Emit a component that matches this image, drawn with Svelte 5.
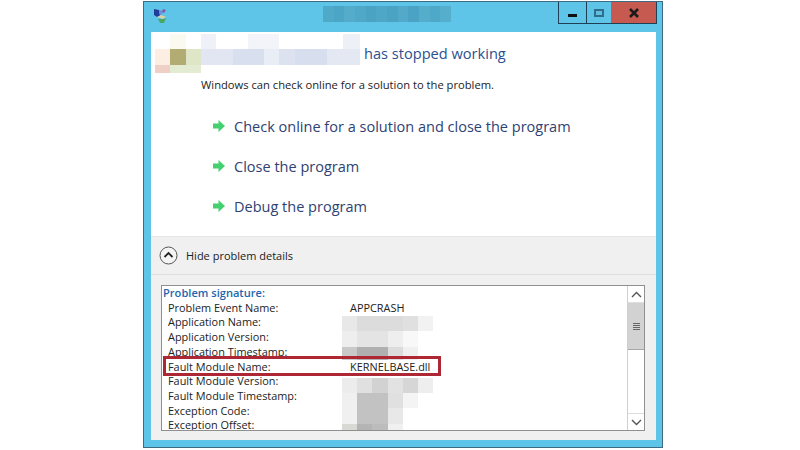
<script>
  const titleCells = ['#4fa9c8','#4ba6c6','#55acca','#4fa8c8','#4aa3c3','#4ea7c7','#4aa3c3','#52a9c9','#4aa3c4','#55adcc','#4ea8c8','#56aecd'];

  const heading = [
    { x: 15, y: 0, w: 16, h: 15, c: '#fbfaf0' },
    { x: 46, y: 0, w: 15, h: 15, c: '#f0f1f8' },
    { x: 93, y: 0, w: 31, h: 15, c: '#f3f4fa' },
    { x: 188, y: 0, w: 17, h: 15, c: '#eef0f8' },
    { x: 0, y: 15, w: 15, h: 16, c: '#fdeee3' },
    { x: 15, y: 15, w: 16, h: 16, c: '#b3ac72' },
    { x: 31, y: 15, w: 15, h: 16, c: '#dfe6c8' },
    { x: 46, y: 15, w: 32, h: 16, c: '#e1e6f2' },
    { x: 78, y: 15, w: 31, h: 16, c: '#d8dfee' },
    { x: 109, y: 15, w: 15, h: 16, c: '#e9edf6' },
    { x: 124, y: 15, w: 16, h: 16, c: '#dde2f0' },
    { x: 140, y: 15, w: 32, h: 16, c: '#d7deed' },
    { x: 172, y: 15, w: 33, h: 16, c: '#e4e8f3' },
    { x: 0, y: 31, w: 15, h: 8, c: '#efcfc6' },
    { x: 15, y: 31, w: 31, h: 8, c: '#e3ecd2' }
  ];

  const blur = [
    { x: 0, y: 0, w: 15, h: 15, c: '#e8e8e8' },
    { x: 15, y: 0, w: 46, h: 15, c: '#dcdcdc' },
    { x: 61, y: 0, w: 15, h: 15, c: '#e0e0e0' },
    { x: 76, y: 0, w: 15, h: 15, c: '#f2f2f2' },
    { x: 0, y: 15, w: 15, h: 16, c: '#eeeeee' },
    { x: 15, y: 15, w: 31, h: 16, c: '#e4e4e4' },
    { x: 46, y: 15, w: 15, h: 16, c: '#eeeeee' },
    { x: 61, y: 15, w: 15, h: 16, c: '#f8f8f8' },
    { x: 0, y: 31, w: 15, h: 15, c: '#c9c9c9' },
    { x: 15, y: 31, w: 31, h: 15, c: '#b0b0b0' },
    { x: 46, y: 31, w: 15, h: 15, c: '#dcdcdc' },
    { x: 61, y: 31, w: 15, h: 15, c: '#f0f0f0' },
    { x: 0, y: 62, w: 15, h: 15, c: '#ececec' },
    { x: 15, y: 62, w: 15, h: 15, c: '#e0e0e0' },
    { x: 30, y: 62, w: 16, h: 15, c: '#d2d2d2' },
    { x: 46, y: 62, w: 15, h: 15, c: '#e2e2e2' },
    { x: 61, y: 62, w: 15, h: 15, c: '#d6d6d6' },
    { x: 76, y: 62, w: 15, h: 15, c: '#eeeeee' },
    { x: 0, y: 77, w: 15, h: 31, c: '#f0f0f0' },
    { x: 15, y: 77, w: 31, h: 31, c: '#c2c2c2' },
    { x: 46, y: 77, w: 15, h: 15, c: '#e0e0e0' },
    { x: 46, y: 92, w: 15, h: 16, c: '#e8e8e8' },
    { x: 61, y: 77, w: 15, h: 15, c: '#f4f4f4' },
    { x: 0, y: 108, w: 15, h: 8, c: '#d8d8d4' },
    { x: 15, y: 108, w: 15, h: 8, c: '#b4b4b4' },
    { x: 30, y: 108, w: 16, h: 8, c: '#bcbcbc' },
    { x: 46, y: 108, w: 15, h: 8, c: '#f0f0f0' }
  ];

  const actions = [
    'Check online for a solution and close the program',
    'Close the program',
    'Debug the program'
  ];

  const rows = [
    ['Problem Event Name:', 'APPCRASH'],
    ['Application Name:', ''],
    ['Application Version:', ''],
    ['Application Timestamp:', ''],
    ['Fault Module Name:', 'KERNELBASE.dll'],
    ['Fault Module Version:', ''],
    ['Fault Module Timestamp:', ''],
    ['Exception Code:', ''],
    ['Exception Offset:', '']
  ];

  const tile = (t) => `left:${t.x}px;top:${t.y}px;width:${t.w}px;height:${t.h}px;background:${t.c}`;
</script>

<div class="page">
  <div class="window">
    <div class="titlebar">
      <svg class="appicon" width="15" height="16" viewBox="0 0 15 16">
        <path d="M1 1l5 1 1 6-3 1-3-2z" fill="#1f3f9a" />
        <path d="M6 2l4 1-1 3-2 2z" fill="#6f8fd8" />
        <path d="M10 1l3 1-2 3-2-1z" fill="#7d5aa8" />
        <path d="M4 9l4-2 5 2-3 2z" fill="#d8d4a8" />
        <path d="M5 11l5 0 3-1-2 5-4 0z" fill="#49a868" />
      </svg>
      <div class="title-blur">
        {#each titleCells as c}
          <span style="background:{c}"></span>
        {/each}
      </div>
      <div class="controls">
        <div class="ctl min"><span class="min-bar"></span></div>
        <div class="ctl max"><span class="max-box"></span></div>
        <div class="ctl close">
          <svg width="12" height="10" viewBox="0 0 12 10">
            <path d="M2 1l8 8M10 1l-8 8" stroke="#1d1a1a" stroke-width="2.6" fill="none" />
          </svg>
        </div>
      </div>
    </div>

    <div class="content">
      <div class="top">
        <div class="heading">
          <div class="heading-blur">
            {#each heading as t}
              <span style={tile(t)}></span>
            {/each}
          </div>
          <span class="heading-text">has stopped working</span>
        </div>
        <p class="sub">Windows can check online for a solution to the problem.</p>
        <ul class="actions">
          {#each actions as a}
            <li>
              <svg width="14" height="14" viewBox="0 0 14 14">
                <path d="M1 4.500h5.500V1L13 7l-6.500 6V9.500H1z" fill="#46cf6e" />
              </svg>
              <span>{a}</span>
            </li>
          {/each}
        </ul>
      </div>

      <div class="details">
        <div class="toggle">
          <span class="chevron">
            <svg width="19" height="19" viewBox="0 0 19 19">
              <circle cx="9.500" cy="9.500" r="8.500" fill="#f4f4f4" stroke="#555" stroke-width="1" />
              <path d="M5.500 11l4-4 4 4" stroke="#222" stroke-width="1.800" fill="none" />
            </svg>
          </span>
          <span>Hide problem details</span>
        </div>
        <div class="panel">
          <div class="listbox">
            <div class="list">
              <div class="blur">
                {#each blur as t}
                  <span style={tile(t)}></span>
                {/each}
              </div>
              <div class="sig">Problem signature:</div>
              {#each rows as r, i}
                <div class="row" class:hl={i === 4}>
                  <span class="k">{r[0]}</span>
                  <span class="v">{r[1]}</span>
                </div>
              {/each}
              <div class="redbox"></div>
            </div>
            <div class="scrollbar">
              <div class="sb-btn">
                <svg width="11" height="7" viewBox="0 0 11 7"><path d="M1 6l4.500-4.500L10 6" stroke="#555" stroke-width="1.400" fill="none" /></svg>
              </div>
              <div class="thumb">
                <span></span><span></span><span></span><span></span>
              </div>
              <div class="track"></div>
              <div class="sb-btn down">
                <svg width="11" height="7" viewBox="0 0 11 7"><path d="M1 1l4.500 4.500L10 1" stroke="#555" stroke-width="1.400" fill="none" /></svg>
              </div>
            </div>
          </div>
        </div>
      </div>
    </div>
  </div>
</div>

<style>
  :global(body) {
    margin: 0;
    background: #fff;
  }

  .page {
    width: 800px;
    height: 450px;
    padding: 1px 0 0 143px;
    box-sizing: border-box;
    font-family: "Open Sans", "Noto Sans", sans-serif;
    overflow: hidden;
  }

  .window {
    width: 520px;
    height: 447px;
    box-sizing: border-box;
    background: #5ec5e9;
    border: 1px solid #3d6b82;
    padding: 0 6px 7px 7px;
    display: flex;
    flex-direction: column;
  }

  .titlebar {
    height: 30px;
    flex: none;
    position: relative;
    display: flex;
    justify-content: center;
  }

  .appicon {
    position: absolute;
    left: 2px;
    top: 6px;
  }

  .title-blur {
    display: flex;
    height: 16px;
    margin: 4px 33px 0 0;
  }

  .title-blur span {
    width: 10.700px;
  }

  .controls {
    position: absolute;
    right: -1px;
    top: 0;
    height: 22px;
    display: flex;
    border: 1px solid #1f3f55;
    border-top: none;
    box-sizing: border-box;
  }

  .ctl {
    display: flex;
    align-items: center;
    justify-content: center;
    height: 21px;
  }

  .min {
    width: 27px;
    border-right: 1px solid #1f3f55;
  }

  .min-bar {
    width: 9px;
    height: 3px;
    background: #111;
    margin-top: 6px;
  }

  .max {
    width: 24px;
  }

  .max-box {
    width: 6px;
    height: 4px;
    border: 2px solid #2c6e8c;
    background: #62bedd;
  }

  .close {
    width: 45px;
    background: #c65a50;
  }

  .content {
    flex: 1;
    display: flex;
    flex-direction: column;
    background: #fff;
    min-height: 0;
  }

  .top {
    height: 204px;
    flex: none;
  }

  .heading {
    position: relative;
    height: 39px;
    padding: 3px 0 0 213px;
    box-sizing: border-box;
  }

  .heading-blur {
    position: absolute;
    left: 4px;
    top: 2px;
  }

  .heading-blur span {
    position: absolute;
    display: block;
  }

  .heading-text {
    font-size: 14.600px;
    line-height: 36px;
    color: #2b4f8f;
  }

  .sub {
    margin: 6px 0 0 50px;
    font-size: 11.200px;
    line-height: 16px;
    color: #222;
  }

  .actions {
    list-style: none;
    margin: 13px 0 0 61px;
    padding: 0;
  }

  .actions li {
    height: 40px;
    display: flex;
    align-items: center;
    gap: 8px;
    font-size: 14.530px;
    color: #2e4272;
  }

  .details {
    flex: 1;
    min-height: 0;
    display: flex;
    flex-direction: column;
    background: #f0f0f0;
    border-top: 1px solid #e6e6e6;
  }

  .toggle {
    height: 38px;
    flex: none;
    box-sizing: border-box;
    display: flex;
    align-items: center;
    gap: 8px;
    padding: 0 0 1px 8px;
    font-size: 11px;
    color: #222;
    border-bottom: 1px solid #dedede;
  }

  .chevron {
    display: flex;
  }

  .panel {
    flex: 1;
    min-height: 0;
    padding: 10px 11px 9px 10px;
  }

  .listbox {
    height: 100%;
    box-sizing: border-box;
    display: flex;
    background: #fff;
    border: 1px solid #8f8f8f;
    overflow: hidden;
  }

  .list {
    flex: 1;
    position: relative;
    padding: 0 0 0 1px;
    overflow: hidden;
    font-size: 10.900px;
    line-height: 14.700px;
    color: #222;
  }

  .blur {
    position: absolute;
    left: 180px;
    top: 30px;
  }

  .blur span {
    position: absolute;
    display: block;
  }

  .sig {
    color: #1c66ad;
    font-weight: 600;
    font-size: 11.100px;
  }

  .row {
    position: relative;
    display: flex;
    padding-left: 5px;
  }

  .hl {
    background: #fff;
  }

  .k {
    width: 182px;
    flex: none;
  }

  .redbox {
    position: absolute;
    left: 1px;
    top: 70px;
    width: 278px;
    height: 20px;
    box-sizing: border-box;
    border: 3px solid #ad2734;
  }

  .scrollbar {
    width: 16px;
    flex: none;
    display: flex;
    flex-direction: column;
    border-left: 1px solid #cfcfcf;
    background: #fff;
  }

  .sb-btn {
    height: 16px;
    flex: none;
    display: flex;
    align-items: center;
    justify-content: center;
    border-bottom: 1px solid #dedede;
  }

  .sb-btn.down {
    border-bottom: none;
    border-top: 1px solid #dedede;
  }

  .thumb {
    height: 46px;
    flex: none;
    background: #d2d2d2;
    border-bottom: 1px solid #a8a8a8;
    display: flex;
    flex-direction: column;
    align-items: center;
    justify-content: center;
    gap: 1px;
  }

  .thumb span {
    width: 7px;
    height: 1px;
    background: #666;
  }

  .track {
    flex: 1;
  }
</style>
